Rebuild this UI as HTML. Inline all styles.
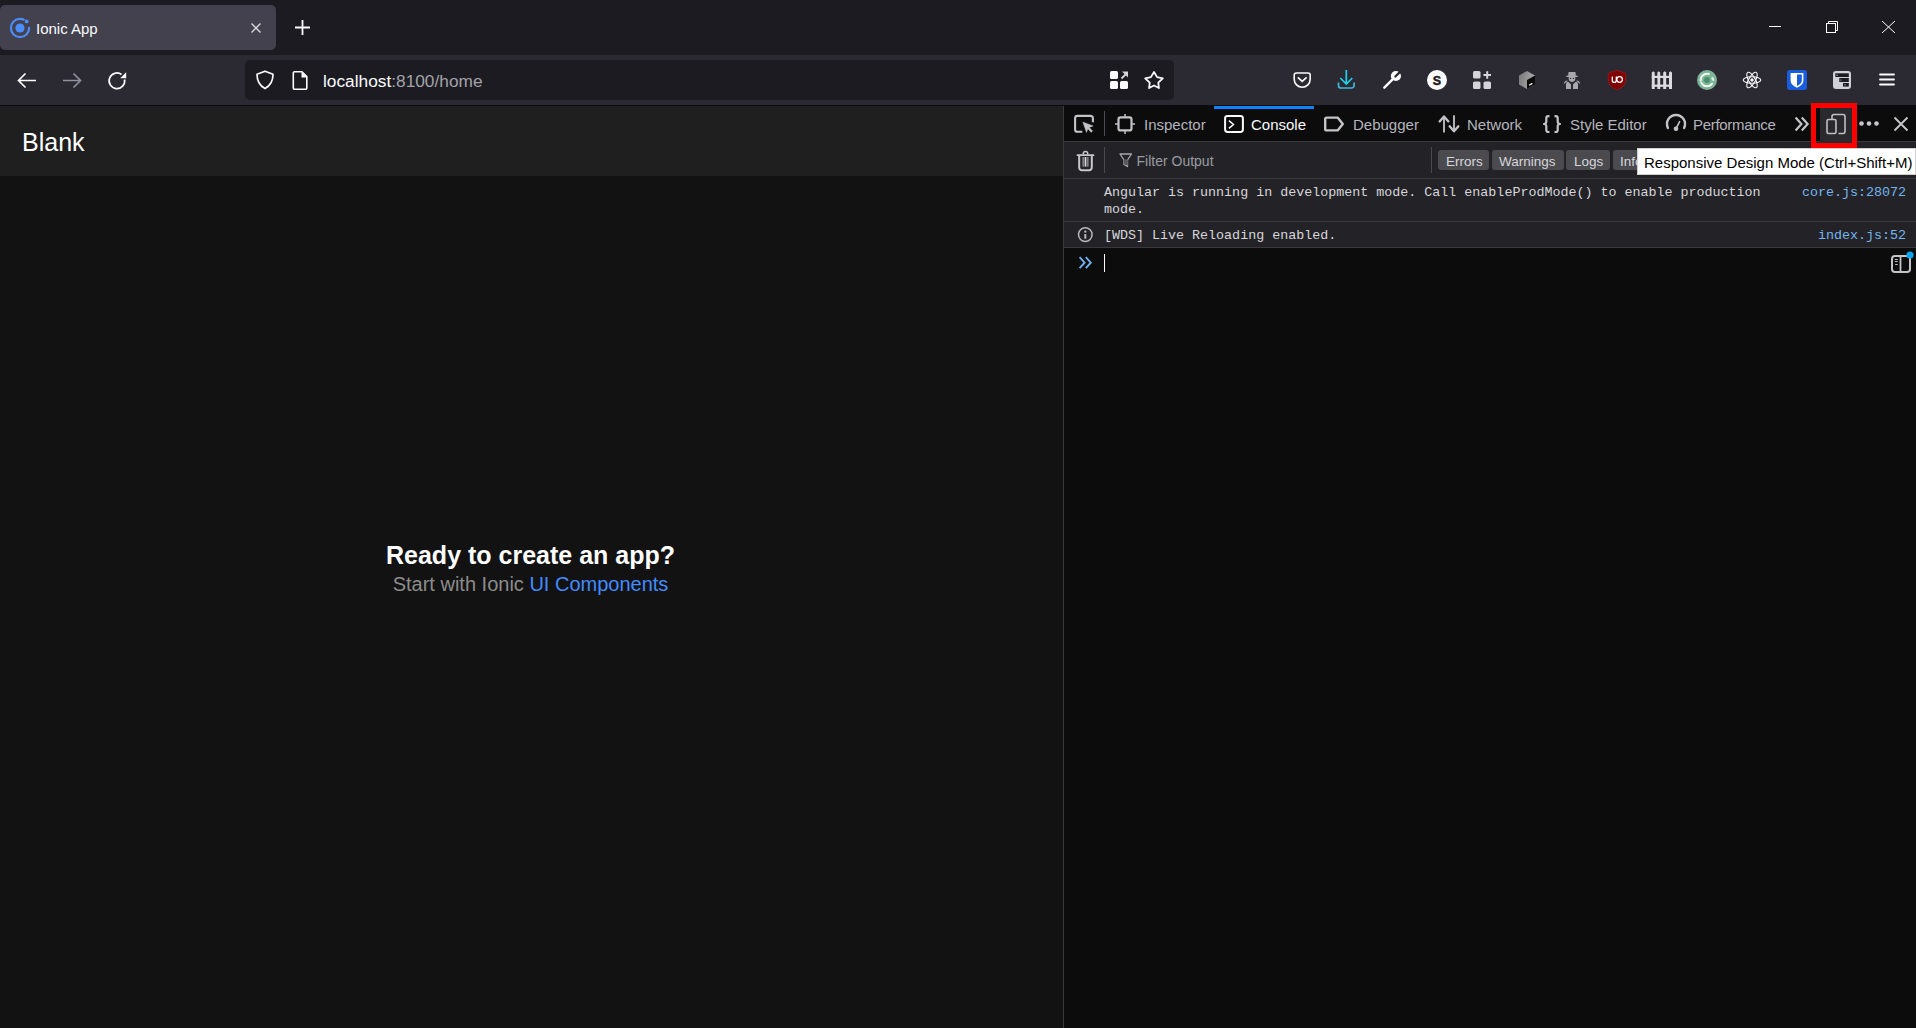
<!DOCTYPE html>
<html><head><meta charset="utf-8">
<style>
*{box-sizing:border-box;margin:0;padding:0}
html,body{width:1916px;height:1028px;overflow:hidden;background:#1c1b22;font-family:"Liberation Sans",sans-serif}
.a{position:absolute}
svg{position:absolute;overflow:visible}
#tabs{left:0;top:0;width:1916px;height:55px;background:#1c1b22}
#seltab{left:0;top:5px;width:276px;height:45px;background:#42414d;border-radius:5px}
#nav{left:0;top:55px;width:1916px;height:50px;background:#2b2a33}
#navline{left:0;top:105px;width:1916px;height:1px;background:#0c0c0d}
#url{left:245px;top:60px;width:929px;height:40px;background:#1c1b22;border-radius:5px}
#page{left:0;top:106px;width:1063px;height:922px;background:#121212}
#hdr{left:0;top:106px;width:1063px;height:70px;background:#1f1f1f}
#split{left:1063px;top:106px;width:1px;height:922px;background:#38383d}
#dt{left:1064px;top:106px;width:852px;height:922px;background:#0c0c0d}
#dttb{left:1064px;top:106px;width:852px;height:36px;background:#0c0c0d;border-bottom:1px solid #38383d}
#filt{left:1064px;top:142px;width:852px;height:37px;background:#232327;border-bottom:1px solid #38383d}
#msgs{left:1064px;top:179px;width:852px;height:69px;background:#232327}
.t{position:absolute;white-space:nowrap;line-height:1}
</style></head><body>
<div id="tabs" class="a"></div>
<div id="seltab" class="a"></div>
<div id="nav" class="a"></div>
<div id="navline" class="a"></div>
<div id="url" class="a"></div>
<div id="page" class="a"></div>
<div id="hdr" class="a"></div>
<div id="split" class="a"></div>
<div id="dt" class="a"></div>
<div id="dttb" class="a"></div>
<div id="filt" class="a"></div>
<div id="msgs" class="a"></div>


<!-- devtools text -->
<div class="t" style="left:1144px;top:117px;font-size:15px;color:#b4b4bc">Inspector</div>
<div class="t" style="left:1251px;top:117px;font-size:15px;color:#fbfbfe">Console</div>
<div class="t" style="left:1353px;top:117px;font-size:15px;color:#b4b4bc">Debugger</div>
<div class="t" style="left:1467px;top:117px;font-size:15px;color:#b4b4bc">Network</div>
<div class="t" style="left:1570px;top:117px;font-size:15px;color:#b4b4bc">Style Editor</div>
<div class="t" style="left:1693px;top:117px;font-size:15px;letter-spacing:-0.3px;color:#b4b4bc">Performance</div>
<div class="t" style="left:1136.5px;top:154px;font-size:14px;color:#9a9aa2">Filter Output</div>
<div class="a" style="left:1438px;top:150px;width:51px;height:20px;background:#4a4a4f;border-radius:3px"></div>
<div class="a" style="left:1492px;top:150px;width:72px;height:20px;background:#4a4a4f;border-radius:3px"></div>
<div class="a" style="left:1566px;top:150px;width:44px;height:20px;background:#4a4a4f;border-radius:3px"></div>
<div class="a" style="left:1613px;top:150px;width:40px;height:20px;background:#4a4a4f;border-radius:3px"></div>
<div class="t" style="left:1446px;top:154.5px;font-size:13.5px;color:#d7d7db">Errors</div>
<div class="t" style="left:1499px;top:154.5px;font-size:13.5px;color:#d7d7db">Warnings</div>
<div class="t" style="left:1574px;top:154.5px;font-size:13.5px;color:#d7d7db">Logs</div>
<div class="t" style="left:1620px;top:154.5px;font-size:13.5px;color:#d7d7db">Info</div>
<!-- tooltip -->
<div class="a" style="left:1637px;top:148px;width:279px;height:27px;background:#fff;border:1px solid #d0d0d0"></div>
<div class="t" style="left:1644px;top:155px;font-size:15px;color:#000">Responsive Design Mode (Ctrl+Shift+M)</div>
<!-- messages -->
<div class="a" style="left:1064px;top:221px;width:852px;height:1px;background:#38383d"></div>
<div class="a" style="left:1064px;top:247px;width:852px;height:1px;background:#38383d"></div>
<div class="t" style="left:1104px;top:183.5px;font-size:13.35px;line-height:17px;color:#d7d7db;font-family:'Liberation Mono',monospace">Angular is running in development mode. Call enableProdMode() to enable production<br>mode.</div>
<div class="t" style="left:1104px;top:226.5px;font-size:13.35px;line-height:17px;color:#d7d7db;font-family:'Liberation Mono',monospace">[WDS] Live Reloading enabled.</div>
<div class="t" style="right:10px;top:183.5px;font-size:13.35px;line-height:17px;color:#75b5f0;font-family:'Liberation Mono',monospace">core.js:28072</div>
<div class="t" style="right:10px;top:226.5px;font-size:13.35px;line-height:17px;color:#75b5f0;font-family:'Liberation Mono',monospace">index.js:52</div>
<div class="a" style="left:1104px;top:254px;width:1px;height:18px;background:#fbfbfe"></div>
<!-- tab text -->
<div class="t" style="left:36px;top:21px;font-size:15px;color:#fbfbfe">Ionic App</div>
<div class="t" style="left:323px;top:73px;font-size:17.3px;color:#fbfbfe">localhost<span style="color:#a3a3a8">:8100/home</span></div>

<!-- page -->
<div class="t" style="left:22px;top:130px;font-size:25px;color:#fff">Blank</div>
<div class="t" style="left:0;width:1061px;text-align:center;top:543px;font-size:25px;font-weight:bold;color:#fff">Ready to create an app?</div>
<div class="t" style="left:0;width:1061px;text-align:center;top:573.5px;font-size:20px;color:#8c8c8c">Start with Ionic <span style="color:#428cff">UI Components</span></div>


<svg class="a" style="left:0;top:0" width="1916" height="1028" viewBox="0 0 1916 1028">
<!-- ionic favicon -->
<circle cx="20" cy="28" r="9.1" fill="none" stroke="#4d8cf8" stroke-width="2.2" stroke-dasharray="49 8.2" stroke-dashoffset="1.6"/>
<circle cx="20" cy="28" r="4.6" fill="#4d8dff"/>
<circle cx="26.7" cy="21.4" r="1.9" fill="#4d8dff"/>
<!-- tab close -->
<path d="M251.5 23.5L260.5 32.5M260.5 23.5L251.5 32.5" stroke="#d8d8dd" stroke-width="1.4"/>
<!-- new tab + -->
<path d="M302.5 20v15M295 27.5h15" stroke="#fbfbfe" stroke-width="1.8"/>
<!-- window controls -->
<path d="M1769 26.5h12" stroke="#fff" stroke-width="1"/>
<rect x="1826.5" y="23.5" width="9" height="9" fill="none" stroke="#fff" stroke-width="1"/>
<path d="M1828.5 23.5v-2h9v9h-2" fill="none" stroke="#fff" stroke-width="1"/>
<path d="M1882 21l13 12M1895 21l-13 12" stroke="#fff" stroke-width="1"/>
<!-- back / fwd / reload -->
<path d="M36 80.5H19M25.5 73.5L18.5 80.5L25.5 87.5" fill="none" stroke="#fbfbfe" stroke-width="1.7"/>
<path d="M63 80.5H80M73.5 73.5L80.5 80.5L73.5 87.5" fill="none" stroke="#8f8f9d" stroke-width="1.7"/>
<path d="M124.6 79.5A7.8 7.8 0 1 1 121.5 74.5" fill="none" stroke="#fbfbfe" stroke-width="1.7"/>
<path d="M126.2 72.3v6h-6z" fill="#fbfbfe"/>
<!-- shield -->
<path d="M265 71.2L273 74.3C273 81.5 270 86 265 88.6C260 86 257 81.5 257 74.3Z" fill="none" stroke="#fbfbfe" stroke-width="1.7" stroke-linejoin="round"/>
<!-- page icon -->
<path d="M294.5 71.8h7.5l4.8 4.8v11.4a1.2 1.2 0 0 1-1.2 1.2h-11.1a1.2 1.2 0 0 1-1.2-1.2v-15a1.2 1.2 0 0 1 1.2-1.2z" fill="none" stroke="#fbfbfe" stroke-width="1.6" stroke-linejoin="round"/>
<path d="M301.5 72v5.5h5.5z" fill="#fbfbfe"/>
</svg>

<svg class="a" style="left:0;top:0" width="1916" height="1028" viewBox="0 0 1916 1028">
<!-- urlbar grid icon -->
<rect x="1110" y="71" width="8" height="8" rx="1.6" fill="#fbfbfe"/>
<rect x="1110" y="81" width="8" height="8" rx="1.6" fill="#fbfbfe"/>
<rect x="1120" y="81" width="8" height="8" rx="1.6" fill="#fbfbfe"/>
<path d="M1121.5 78.5L1126 74" stroke="#d4d4da" stroke-width="1.8"/>
<path d="M1122 71.5h6v6z" fill="#d4d4da"/>
<!-- star -->
<path d="M1154 72L1157.1 77.1L1162.8 78.4L1158.3 82.7L1158.9 88L1154 85.5L1149.1 88L1149.7 82.7L1145.2 78.4L1150.9 77.1Z" fill="none" stroke="#fbfbfe" stroke-width="1.8" stroke-linejoin="round"/>
<!-- pocket -->
<path d="M1294.2 75.2Q1294.2 73 1296.4 73H1308Q1310.2 73 1310.2 75.2V79.2A8 8 0 0 1 1294.2 79.2Z" fill="none" stroke="#fbfbfe" stroke-width="1.6"/>
<path d="M1297.8 77.4L1302.2 81.4L1306.6 77.4" fill="none" stroke="#fbfbfe" stroke-width="1.7"/>
<!-- download -->
<path d="M1346.3 70V84M1340.3 78L1346.3 84L1352.3 78" fill="none" stroke="#1fd0ee" stroke-width="1.7"/>
<path d="M1338.5 82.5V85.5A2.5 2.5 0 0 0 1341 88H1351.6A2.5 2.5 0 0 0 1354.1 85.5V82.5" fill="none" stroke="#3fb8d8" stroke-width="1.7"/>
<!-- wrench -->
<path d="M1384.3 87.7L1392.6 79.4" stroke="#fbfbfe" stroke-width="2.4" stroke-linecap="round"/>
<circle cx="1395.9" cy="76" r="5.1" fill="#fbfbfe"/>
<path d="M1395.4 76.5L1401.8 70.1" stroke="#2b2a33" stroke-width="2.3" stroke-linecap="round"/>
<!-- S -->
<circle cx="1437" cy="80" r="10" fill="#fbfbfe"/>
<text x="1437" y="84.6" text-anchor="middle" font-family="Liberation Sans" font-weight="bold" font-size="12.5" fill="#1c1b22" stroke="#1c1b22" stroke-width="0.45">S</text>
<!-- grid+ -->
<rect x="1473" y="71" width="7.5" height="7.5" rx="1.6" fill="#d4d4da"/>
<rect x="1473" y="81.5" width="7.5" height="7.5" rx="1.6" fill="#d4d4da"/>
<rect x="1483.5" y="81.5" width="7.5" height="7.5" rx="1.6" fill="#d4d4da"/>
<path d="M1487.2 71.2v7.6M1483.4 75h7.6" stroke="#d4d4da" stroke-width="2"/>
<!-- cube -->
<defs><linearGradient id="cg" x1="0" y1="0" x2="1" y2="0.3"><stop offset="0" stop-color="#777"/><stop offset="1" stop-color="#aaa"/></linearGradient></defs>
<path d="M1527 71L1535 75.5V84.5L1527 89L1519 84.5V75.5Z" fill="url(#cg)"/>
<path d="M1527 80L1535 75.5V84.5L1527 89Z" fill="#0a0a0a"/>
<path d="M1529.2 85.2L1532.4 83.4" stroke="#fff" stroke-width="1.3"/>
<!-- spy -->
<g fill="#a9a9ad">
<rect x="1568.3" y="72" width="7.4" height="4.2" rx="1"/>
<ellipse cx="1572" cy="76.2" rx="6" ry="1.1"/>
<circle cx="1572" cy="78.6" r="3.3"/>
<path d="M1566 89V84Q1566 81.8 1568.2 81.8L1571 84.5V89Z"/>
<path d="M1578 89V84Q1578 81.8 1575.8 81.8L1573 84.5V89Z"/>
<path d="M1564.3 83.5Q1565 81 1567.5 81" fill="none" stroke="#a9a9ad" stroke-width="1.2"/>
<path d="M1579.7 83.5Q1579 81 1576.5 81" fill="none" stroke="#a9a9ad" stroke-width="1.2"/>
</g>
<circle cx="1570.6" cy="78.4" r="0.6" fill="#2b2a33"/><circle cx="1573.4" cy="78.4" r="0.6" fill="#2b2a33"/>
<!-- ublock -->
<path d="M1617 70.3L1625.7 73.2V80Q1625.7 86.5 1617 89.7Q1608.3 86.5 1608.3 80V73.2Z" fill="#800000" stroke="#a01818" stroke-width="0.8"/>
<path d="M1612.3 76.5V80.2Q1612.3 82.4 1614.3 82.4Q1616.3 82.4 1616.3 80.2V76.5" fill="none" stroke="#fff" stroke-width="1.3"/>
<circle cx="1619.6" cy="79.5" r="2.8" fill="none" stroke="#fff" stroke-width="1.3"/>
<circle cx="1619.6" cy="79.5" r="0.7" fill="#800000"/>
<!-- fence -->
<g fill="#dcdce0">
<path d="M1651.8 72.5L1653.2 71.3L1654.7 72.5V89H1651.8Z"/>
<path d="M1657.4 72.5L1658.8 71.3L1660.2 72.5V89H1657.4Z"/>
<path d="M1663.2 72.5L1664.7 71.3L1666.2 72.5V89H1663.2Z"/>
<path d="M1669 72.5L1670.5 71.3L1672 72.5V89H1669Z"/>
<rect x="1651.8" y="75.8" width="20.2" height="2.2"/>
<rect x="1651.8" y="84.6" width="20.2" height="2.2"/>
</g>
<!-- green circle -->
<circle cx="1707" cy="80" r="10" fill="#7db599"/>
<circle cx="1707" cy="80" r="2.9" fill="#4a8f6d"/>
<circle cx="1707" cy="80" r="6.3" fill="none" stroke="#f0f7f3" stroke-width="2" stroke-linecap="round" stroke-dasharray="0 3.9 12.6 2.2 12.1 8.8" />
<circle cx="1712.6" cy="78.4" r="1.2" fill="#f0f7f3"/>
<!-- react -->
<g fill="none" stroke="#fbfbfe" stroke-width="1.1">
<ellipse cx="1752" cy="80" rx="8.8" ry="3.3"/>
<ellipse cx="1752" cy="80" rx="8.8" ry="3.3" transform="rotate(60 1752 80)"/>
<ellipse cx="1752" cy="80" rx="8.8" ry="3.3" transform="rotate(120 1752 80)"/>
</g>
<circle cx="1752" cy="80" r="1.7" fill="#fbfbfe"/>
<!-- bitwarden -->
<rect x="1787" y="70" width="20" height="20" rx="3" fill="#175ddc"/>
<path d="M1790.6 73H1803.4V80.8Q1803.4 85 1797 87.8Q1790.6 85 1790.6 80.8Z" fill="#fff"/>
<path d="M1797 74.6H1801.8V80.6Q1801.8 83.8 1797 86.1Z" fill="#175ddc"/>
<!-- storage -->
<rect x="1833" y="71" width="18" height="18" rx="3" fill="#d0d0d8"/>
<rect x="1835.3" y="73.3" width="13.5" height="3.7" fill="#1c1b22"/>
<rect x="1839.3" y="78" width="9.5" height="4" fill="#1c1b22"/>
<rect x="1843" y="83" width="5.8" height="3.6" fill="#1c1b22"/>
<circle cx="1837" cy="75.2" r="0.6" fill="#ddd"/><circle cx="1841" cy="80" r="0.6" fill="#ddd"/><circle cx="1845" cy="84.8" r="0.6" fill="#ddd"/>
<!-- menu -->
<path d="M1880 74.5h14M1880 79.5h14M1880 84.5h14" stroke="#fbfbfe" stroke-width="1.8" stroke-linecap="round"/>
</svg>

<svg class="a" style="left:0;top:0" width="1916" height="1028" viewBox="0 0 1916 1028">
<!-- console tab top highlight -->
<rect x="1214" y="106" width="100" height="3" fill="#0a84ff"/>
<!-- pick -->
<path d="M1082.3 131.8H1077.4A2.3 2.3 0 0 1 1075.1 129.5V118.2A2.3 2.3 0 0 1 1077.4 115.9H1090.6A2.3 2.3 0 0 1 1092.9 118.2V122.3" fill="none" stroke="#c4c4c8" stroke-width="2.1"/>
<path d="M1082.8 122L1093.2 125.9L1089.3 127.4L1092.6 131L1091.1 132.4L1087.9 128.8L1086.5 132.5Z" fill="#c4c4c8" stroke="#c4c4c8" stroke-width="0.4" stroke-linejoin="round"/>
<!-- separators -->
<rect x="1104" y="111" width="1" height="25" fill="#4a4a50"/>
<rect x="1104" y="147" width="1" height="26" fill="#4a4a50"/>
<rect x="1431" y="147" width="1" height="26" fill="#4a4a50"/>
<!-- inspector -->
<rect x="1118.5" y="117.4" width="13" height="13" rx="2" fill="none" stroke="#c4c4c8" stroke-width="2.2"/>
<path d="M1125 114v3M1125 131v3M1115 124h3M1132 124h3" stroke="#c4c4c8" stroke-width="1.5"/>
<!-- console icon -->
<rect x="1225.1" y="116.1" width="17.8" height="15.8" rx="2.4" fill="none" stroke="#fbfbfe" stroke-width="2"/>
<path d="M1228.9 120.6L1233.5 124.5L1228.9 128.4" fill="none" stroke="#fbfbfe" stroke-width="1.5"/>
<!-- debugger -->
<path d="M1326.6 117.6H1337.6L1342.8 124L1337.6 130.4H1326.6A1.4 1.4 0 0 1 1325.2 129V119A1.4 1.4 0 0 1 1326.6 117.6Z" fill="none" stroke="#c4c4c8" stroke-width="2.4" stroke-linejoin="round"/>
<!-- network -->
<path d="M1444 131.8V117" fill="none" stroke="#c4c4c8" stroke-width="1.8" stroke-linecap="round"/>
<path d="M1439.6 121.4L1444 116.4L1448.4 121.4" fill="none" stroke="#c4c4c8" stroke-width="2.3" stroke-linecap="round" stroke-linejoin="round"/>
<path d="M1454 116V130.8" fill="none" stroke="#c4c4c8" stroke-width="1.8" stroke-linecap="round"/>
<path d="M1449.6 126.3L1454 131.3L1458.4 126.3" fill="none" stroke="#c4c4c8" stroke-width="2.3" stroke-linecap="round" stroke-linejoin="round"/>
<!-- style editor braces -->
<path d="M1549.5 116.2H1548.3Q1546.3 116.2 1546.3 118.2V121.8Q1546.3 123.8 1544 124Q1546.3 124.2 1546.3 126.2V130Q1546.3 132 1548.3 132H1549.5" fill="none" stroke="#c4c4c8" stroke-width="2.2" stroke-linejoin="round"/>
<path d="M1554.5 116.2H1555.7Q1557.7 116.2 1557.7 118.2V121.8Q1557.7 123.8 1560 124Q1557.7 124.2 1557.7 126.2V130Q1557.7 132 1555.7 132H1554.5" fill="none" stroke="#c4c4c8" stroke-width="2.2" stroke-linejoin="round"/>
<!-- performance gauge -->
<path d="M1667.9 127.9A9 9 0 1 1 1684.1 127.9" fill="none" stroke="#c4c4c8" stroke-width="2.4" stroke-linecap="round"/>
<path d="M1676 128.6L1679.6 121.6" stroke="#c4c4c8" stroke-width="1.6" stroke-linecap="round"/>
<circle cx="1676" cy="128.8" r="2.3" fill="#c4c4c8"/>
<!-- chevrons -->
<path d="M1795.6 117.6L1801.4 124L1795.6 130.4M1801.8 117.6L1807.6 124L1801.8 130.4" fill="none" stroke="#c4c4c8" stroke-width="2.2"/>
<!-- rdm highlight -->
<rect x="1820" y="108" width="32" height="35" fill="#2a2a2e"/>
<rect x="1813.5" y="105.5" width="41" height="40" fill="none" stroke="#ff0000" stroke-width="5"/>
<path d="M1832 119V116.5A2 2 0 0 1 1834 114.5H1843A2 2 0 0 1 1845 116.5V131.5A2 2 0 0 1 1843 133.5H1838.5" fill="none" stroke="#c0c0c4" stroke-width="1.6"/>
<rect x="1827" y="119.5" width="9" height="14" rx="1.6" fill="none" stroke="#c0c0c4" stroke-width="1.6"/>
<!-- dots -->
<circle cx="1861.5" cy="123.5" r="2.3" fill="#c8c8cc"/><circle cx="1869" cy="123.5" r="2.3" fill="#c8c8cc"/><circle cx="1876.5" cy="123.5" r="2.3" fill="#c8c8cc"/>
<!-- close -->
<path d="M1894.5 117.5L1907.5 130.5M1907.5 117.5L1894.5 130.5" stroke="#c8c8cc" stroke-width="1.8"/>
<!-- trash -->
<path d="M1077.5 155.2H1093.5" stroke="#c8c8cc" stroke-width="1.8" stroke-linecap="round"/>
<path d="M1083.3 154.5V153.6A2.2 2.2 0 0 1 1087.7 153.6V154.5" fill="none" stroke="#c8c8cc" stroke-width="1.5"/>
<path d="M1079.2 156V167.6A2.6 2.6 0 0 0 1081.8 170.2H1089.2A2.6 2.6 0 0 0 1091.8 167.6V156" fill="none" stroke="#c8c8cc" stroke-width="2"/>
<rect x="1082.4" y="157" width="6.2" height="9.6" fill="#6a6a70"/>
<path d="M1085.5 157V166.6" stroke="#e0e0e4" stroke-width="0.9"/>
<path d="M1083.2 157V166.6M1087.8 157V166.6" stroke="#909096" stroke-width="0.9"/>
<!-- filter -->
<path d="M1120 154H1131.5L1127.5 160V166.5L1124 164.5V160Z" fill="none" stroke="#a8a8ac" stroke-width="1.3" stroke-linejoin="round"/>
<path d="M1123.6 159.5H1127.9V165.6L1124 163.8Z" fill="#58585d"/>
<!-- info icon -->
<circle cx="1085.3" cy="234.6" r="6.8" fill="none" stroke="#b8b8bc" stroke-width="1.5"/>
<circle cx="1085.3" cy="231.6" r="1.2" fill="#b8b8bc"/>
<rect x="1084.3" y="234" width="2" height="4.8" rx="0.6" fill="#b8b8bc"/>
<!-- prompt chevrons -->
<path d="M1079.6 257.2L1084.6 262.7L1079.6 268.2M1085.8 257.2L1090.8 262.7L1085.8 268.2" fill="none" stroke="#6fb0f0" stroke-width="1.9"/>
<!-- sidebar toggle -->
<rect x="1892" y="255.9" width="18" height="16" rx="3" fill="none" stroke="#c4c4c8" stroke-width="2"/>
<rect x="1899.6" y="256.5" width="1.8" height="15.5" fill="#c4c4c8"/>
<path d="M1894.8 259.5h3M1894.8 261.6h3M1895.2 264.5h2.5" stroke="#d8d8dc" stroke-width="0.9"/>
<circle cx="1910" cy="255" r="3.6" fill="#0ea5ec"/>
</svg>
</body></html>
